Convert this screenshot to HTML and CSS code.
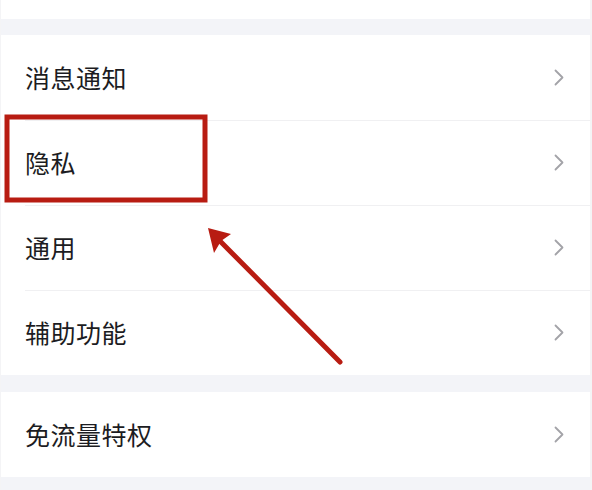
FILE: index.html
```html
<!DOCTYPE html>
<html lang="zh-CN">
<head>
<meta charset="utf-8">
<link rel="stylesheet" href="styles.css">
</head>
<body>
<div class="page">
  <div class="top-space"></div>
  <div class="gap"></div>
  <ul class="group">
    <li class="row"><span class="label">消息通知</span><svg class="chev" viewBox="0 0 10 17"><polyline points="1.5,1.5 8.5,8.5 1.5,15.5"/></svg></li>
    <li class="row"><span class="label">隐私</span><svg class="chev" viewBox="0 0 10 17"><polyline points="1.5,1.5 8.5,8.5 1.5,15.5"/></svg></li>
    <li class="row"><span class="label">通用</span><svg class="chev" viewBox="0 0 10 17"><polyline points="1.5,1.5 8.5,8.5 1.5,15.5"/></svg></li>
    <li class="row"><span class="label">辅助功能</span><svg class="chev" viewBox="0 0 10 17"><polyline points="1.5,1.5 8.5,8.5 1.5,15.5"/></svg></li>
  </ul>
  <div class="gap"></div>
  <ul class="group">
    <li class="row"><span class="label">免流量特权</span><svg class="chev" viewBox="0 0 10 17"><polyline points="1.5,1.5 8.5,8.5 1.5,15.5"/></svg></li>
  </ul>
  <div class="gap tail"></div>
  <svg class="annot" viewBox="0 0 592 490" width="592" height="490">
    <rect x="7" y="117" width="198" height="83" fill="none" stroke="#b81c12" stroke-width="5"/>
    <line x1="340" y1="362" x2="216" y2="237" stroke="#b81c12" stroke-width="5" stroke-linecap="round"/>
    <polygon points="208,228 231,234 221,241 214,253" fill="#b81c12"/>
  </svg>
</div>
</body>
</html>
```
FILE: styles.css
```css
html, body {
  margin: 0;
  padding: 0;
  background: #ffffff;
}
.page {
  position: relative;
  width: 592px;
  height: 490px;
  overflow: hidden;
  font-family: "Noto Sans CJK SC", "Noto Sans", sans-serif;
  border-left: 1px solid #f4f4f6;
  border-right: 2px solid #f4f4f6;
  box-sizing: border-box;
}
.top-space {
  height: 19px;
  background: #ffffff;
}
.gap {
  height: 16px;
  background: #f3f4f8;
}
.group + .gap {
  height: 17px;
}
.gap.tail {
  height: 20px;
}
.group {
  list-style: none;
  margin: 0;
  padding: 0;
  background: #ffffff;
}
.row {
  height: 85px;
  display: flex;
  align-items: center;
  justify-content: space-between;
  padding: 0 24px 0 24px;
  position: relative;
  box-sizing: border-box;
}
.row + .row::before {
  content: "";
  position: absolute;
  left: 24px;
  right: 0;
  top: 0;
  height: 1px;
  background: #f0f0f2;
}
.label {
  font-size: 25px;
  color: #1c1c22;
  letter-spacing: 0.5px;
  line-height: 1;
}
.chev {
  width: 10px;
  height: 17px;
  margin-right: 2px;
}
.chev polyline {
  fill: none;
  stroke: #a3a3a8;
  stroke-width: 1.8;
  stroke-linecap: round;
  stroke-linejoin: round;
}
.annot {
  position: absolute;
  left: -1px;
  top: 0;
  pointer-events: none;
}
```
